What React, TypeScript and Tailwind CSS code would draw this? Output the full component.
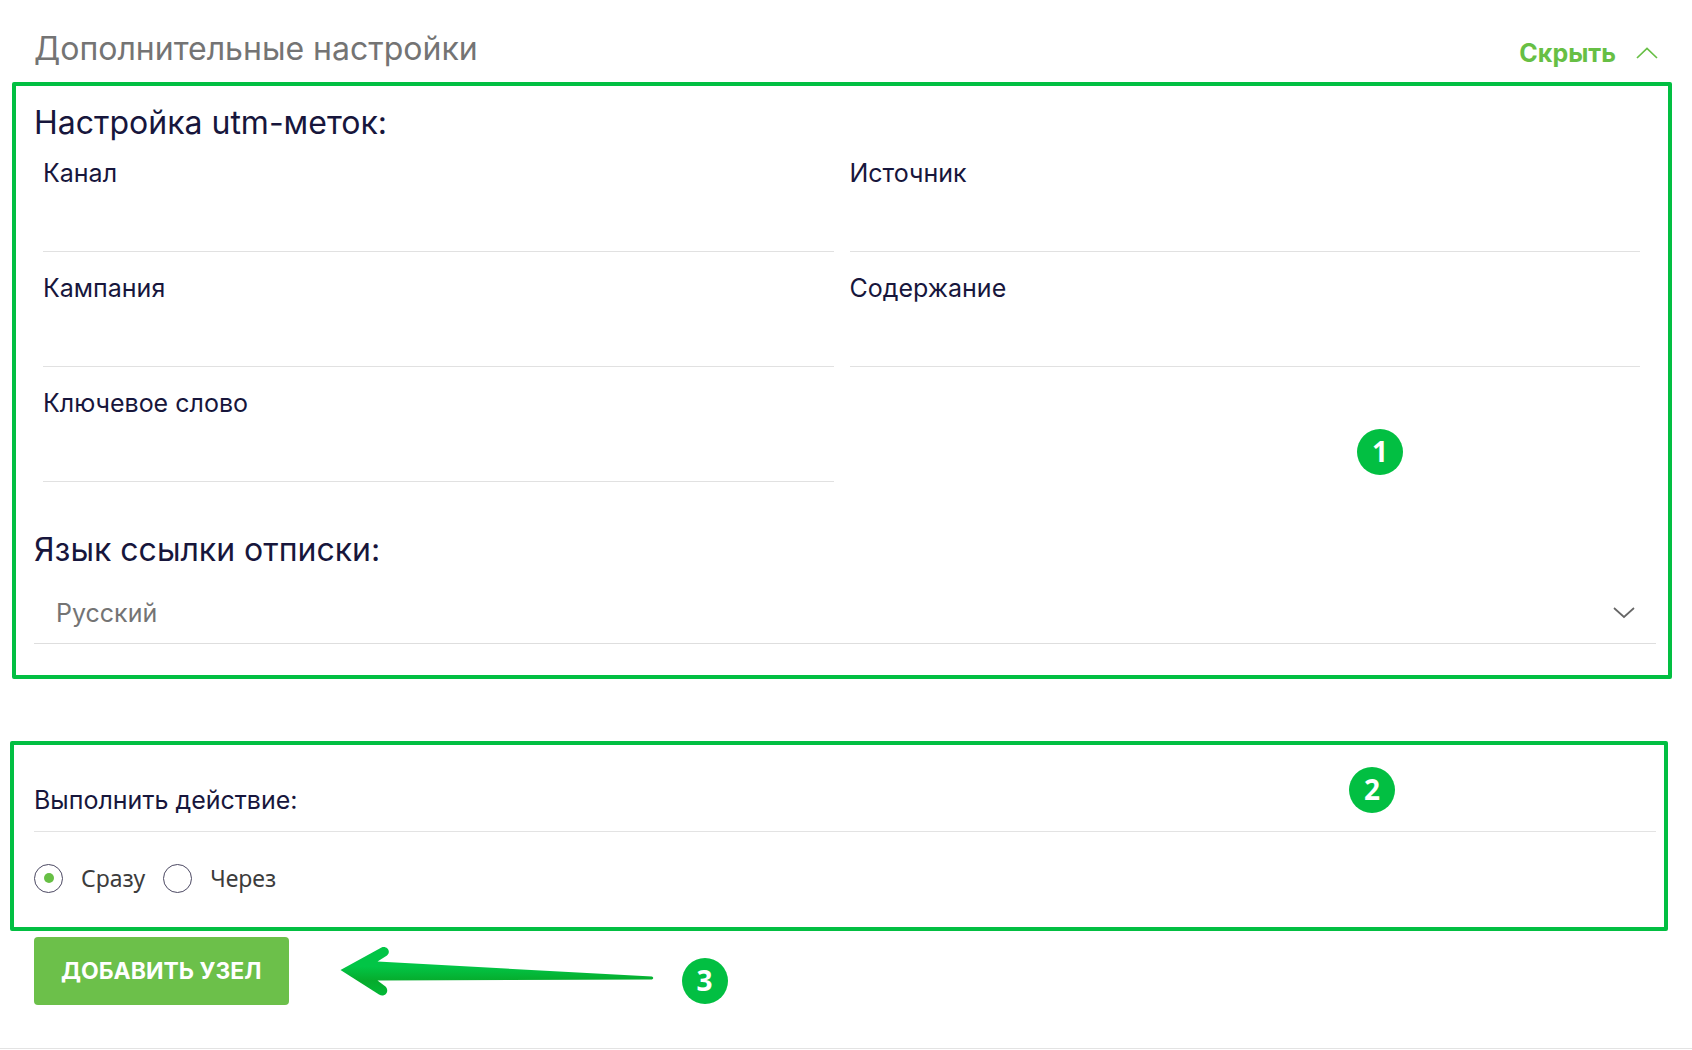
import { useState } from "react";

const utmFields = [
  { id: "channel", label: "Канал" },
  { id: "source", label: "Источник" },
  { id: "campaign", label: "Кампания" },
  { id: "content", label: "Содержание" },
  { id: "keyword", label: "Ключевое слово" },
];

const timings = [
  { id: "now", label: "Сразу" },
  { id: "later", label: "Через" },
];

function Badge({ children, className = "" }: { children: string; className?: string }) {
  return (
    <span
      className={`flex size-[46px] items-center justify-center rounded-full bg-[#02bf42] pb-0.5 font-['Noto_Sans',sans-serif] text-[28px] leading-none font-bold text-white ${className}`}
    >
      {children}
    </span>
  );
}

function Chevron({ up = false, className = "" }: { up?: boolean; className?: string }) {
  return (
    <svg width="22" height="12" viewBox="0 0 22 12" fill="none" stroke="currentColor" strokeWidth="1.7" className={className} aria-hidden="true">
      <path d={up ? "M1 11 11 1.5 21 11" : "M1 1 11 10 21 1"} />
    </svg>
  );
}

function Arrow() {
  return (
    <svg width="314" height="50" viewBox="0 0 314 50" className="shrink-0" aria-hidden="true">
      <defs>
        <linearGradient id="arrow-fill" x1="0" y1="0" x2="0" y2="1">
          <stop offset="0" stopColor="#02c546" />
          <stop offset="0.4" stopColor="#02c546" />
          <stop offset="0.7" stopColor="#06ab2c" />
          <stop offset="1" stopColor="#02b836" />
        </linearGradient>
      </defs>
      <path
        d="M0.500 24 L41.500 1.500 C47 -0.500 51.500 5.500 47 9.500 L37.500 15.500 L312 30.500 Q314.500 32 312 33.500 L37.500 34.500 L45.500 40.500 C50 45 45 52 39 48.500 Z"
        fill="url(#arrow-fill)"
      />
    </svg>
  );
}

export default function App() {
  const [timing, setTiming] = useState("now");

  return (
    <main className="border-b border-[#e3e3e3] bg-white pt-4 pb-[43px] font-['Inter',sans-serif] text-[#17163c]">
      <header className="flex h-[66px] items-center justify-between pr-[34px] pl-[34px]">
        <h1 className="text-[32px] leading-10 text-[#747474]">Дополнительные настройки</h1>
        <button type="button" className="mt-2 flex items-center gap-5 text-[25px] leading-8 font-bold text-[#67bf45]">
          Скрыть
          <Chevron up />
        </button>
      </header>

      <section className="relative mr-5 ml-3 rounded-xs border-4 border-[#02bf42] pt-[17px] pr-3 pb-[31px] pl-[18px]">
        <h2 className="text-[32px] leading-10">Настройка utm-меток:</h2>
        <div className="mt-[11px] mr-4 ml-[9px] grid grid-cols-2 gap-x-4 gap-y-[17px]">
          {utmFields.map((field) => (
            <div key={field.id} className="flex flex-col">
              <label htmlFor={field.id} className="text-[25px] leading-[38px]">
                {field.label}
              </label>
              <input
                id={field.id}
                type="text"
                className="h-[60px] w-full border-b border-[#e1e1e1] bg-transparent text-[25px] outline-none"
              />
            </div>
          ))}
        </div>

        <h2 className="mt-12 text-[32px] leading-10">
          <label htmlFor="language">Язык ссылки отписки:</label>
        </h2>
        <div className="relative mt-3">
          <select
            id="language"
            className="h-[62px] w-full appearance-none border-b border-[#dedede] bg-transparent pt-0.5 pr-16 pl-[22px] text-[25px] text-[#747474] outline-none"
          >
            <option>Русский</option>
          </select>
          <Chevron className="pointer-events-none absolute top-[25px] right-[21px] text-[#666666]" />
        </div>

        <Badge className="absolute top-[343px] right-[265px]">1</Badge>
      </section>

      <fieldset className="relative mt-[62px] mr-6 ml-2.5 rounded-xs border-4 border-[#02bf42] pt-8 pr-2 pb-[31px] pl-5">
        <legend className="float-left w-full border-b border-[#e3e3e3] pt-1 pb-3 text-[25px] leading-[38px]">
          Выполнить действие:
        </legend>
        <div className="clear-both flex items-center gap-[18px] pt-7 font-['Noto_Sans',sans-serif] text-[23px] leading-9 text-[#3c3c3c]">
          {timings.map((option) => (
            <label key={option.id} className="flex items-center gap-[18px]">
              <input
                type="radio"
                name="timing"
                checked={timing === option.id}
                onChange={() => setTiming(option.id)}
                className="grid size-[29px] appearance-none place-items-center rounded-full border border-[#4b4862] before:size-2.5 before:rounded-full checked:before:bg-[#67bf45]"
              />
              {option.label}
            </label>
          ))}
        </div>
        <Badge className="absolute top-[22px] right-[269px]">2</Badge>
      </fieldset>

      <div className="mt-1.5 flex items-center pl-[34px]">
        <button
          type="button"
          className="h-[68px] rounded-sm bg-[#6cc04a] px-[27px] text-[23px] font-bold text-white uppercase"
        >
          Добавить узел
        </button>
        <div className="ml-[51px] flex items-center gap-7">
          <Arrow />
          <Badge className="mt-5">3</Badge>
        </div>
      </div>
    </main>
  );
}
